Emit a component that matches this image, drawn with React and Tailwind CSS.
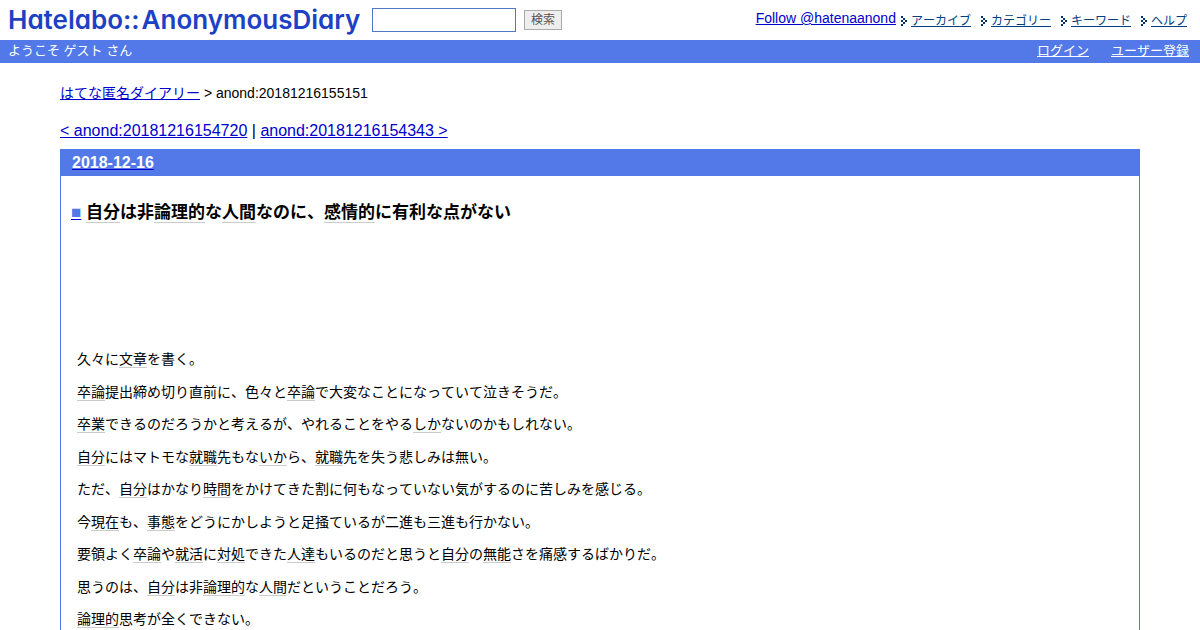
const guideLinks = ['アーカイブ', 'カテゴリー', 'キーワード', 'ヘルプ'];

// Strings are plain text; one-element arrays are keyword links.
const title = [['自分'], 'は非', ['論理的'], 'な', ['人間'], 'なのに、', ['感情的'], 'に有利な点がない'];

const paragraphs = [
  ['久々に', ['文章'], 'を書く。'],
  [['卒論'], '提出締め切り直前に、色々と', ['卒論'], 'で大変なことになっていて泣きそうだ。'],
  [['卒業'], 'できるのだろうかと考えるが、やれることをやる', ['しか'], 'ないのかもしれない。'],
  [['自分'], 'にはマトモな', ['就職'], '先もな', ['いか'], 'ら、', ['就職'], '先を失う悲しみは無い。'],
  ['ただ、', ['自分'], 'はかなり', ['時間'], 'をかけてきた割に何もなっていない気がするのに苦しみを感じる。'],
  ['今', ['現在'], 'も、', ['事態'], 'をどうにかしようと足掻ているが二進も三進も行かない。'],
  ['要領よく', ['卒論'], 'や', ['就活'], 'に', ['対処'], 'できた', ['人達'], 'もいるのだと思うと', ['自分'], 'の', ['無能'], 'さを痛感するばかりだ。'],
  ['思うのは、', ['自分'], 'は非', ['論理的'], 'な', ['人間'], 'だということだろう。'],
  [['論理的'], '思考が全くできない。'],
];

function Rich({ parts }) {
  return parts.map((part, i) =>
    Array.isArray(part) ? (
      <a key={i} href="#keyword" className="border-b border-[#cccccc]">{part[0]}</a>
    ) : (
      <span key={i}>{part}</span>
    )
  );
}

function Arrow() {
  return (
    <svg className="h-[10px] w-[6px]" viewBox="0 0 6 10" fill="#003366" shapeRendering="crispEdges" aria-hidden="true">
      <path d="M0 0h2v2H0zM2 2h2v2H2zM4 4h2v2H4zM2 6h2v2H2zM0 8h2v2H0zM0 4h2v2H0z" />
    </svg>
  );
}

export default function App() {
  return (
    <div className="min-h-screen bg-white font-['Liberation_Sans','Noto_Sans_CJK_JP',sans-serif] text-black [font-kerning:none]">
      <header className="flex h-10 items-center">
        <a href="#top" className="ml-2 flex w-[352px] gap-[2px] font-[Inter,sans-serif] text-[26px] leading-8 font-semibold text-[#1d41c4] [font-feature-settings:'cv11'] [font-kerning:normal]">
          <span>Hatelabo::</span>
          <span>AnonymousDiary</span>
        </a>
        <form className="ml-3 flex items-center gap-2" onSubmit={(e) => e.preventDefault()}>
          <input type="text" aria-label="検索" className="h-6 w-36 border border-[#5279c8] bg-white px-1 text-sm outline-none" />
          <button type="submit" className="h-5 border border-[#aaaaaa] bg-[#eeeeee] px-[6px] text-[12px] leading-4 text-[#555555]">検索</button>
        </form>
        <nav className="mr-[13px] ml-auto flex items-start pt-[2px] text-[12px] leading-5">
          <a href="#follow" className="mr-[5px] text-[14px] leading-[14px] text-[#0000cc] underline">Follow @hatenaanond</a>
          <ul className="flex gap-[10px]">
            {guideLinks.map((label) => (
              <li key={label} className="flex items-center gap-1">
                <Arrow />
                <a href="#guide" className="text-[#004080] underline">{label}</a>
              </li>
            ))}
          </ul>
        </nav>
      </header>

      <div className="flex h-[23px] items-start justify-between bg-[#5279e7] pr-[11px] pl-2 text-[13px] leading-[22px] text-white">
        <p>ようこそ ゲスト さん</p>
        <div className="flex gap-[22px]">
          <a href="#login" className="underline">ログイン</a>
          <a href="#register" className="underline">ユーザー登録</a>
        </div>
      </div>

      <main className="mx-[60px] pt-5">
        <p className="text-[14px] leading-5">
          <a href="#diary" className="text-[#0000cc] underline">はてな匿名ダイアリー</a> &gt; anond:20181216155151
        </p>
        <p className="mt-[18px] text-[16px] leading-5">
          <a href="#prev" className="text-[#0000cc] underline">&lt; anond:20181216154720</a> |{' '}
          <a href="#next" className="text-[#0000cc] underline">anond:20181216154343 &gt;</a>
        </p>

        <article className="mt-2 border border-[#5279e7]">
          <h2 className="bg-[#5279e7] px-[11px] pb-px text-[16px] leading-[25px] font-bold">
            <a href="#date" className="text-white underline decoration-[#0000cc]">2018-12-16</a>
          </h2>
          <h3 className="mt-[25px] px-[10px] text-[17px] leading-6 font-bold">
            <a href="#entry" className="text-[#5279e7] underline decoration-[#0000cc]">■</a>{' '}
            <Rich parts={title} />
          </h3>
          <div className="mt-[126px] flex flex-col gap-[15px] px-4 pb-4 text-[14px] leading-tight">
            {paragraphs.map((parts, i) => (
              <p key={i}><Rich parts={parts} /></p>
            ))}
          </div>
        </article>
      </main>
    </div>
  );
}
